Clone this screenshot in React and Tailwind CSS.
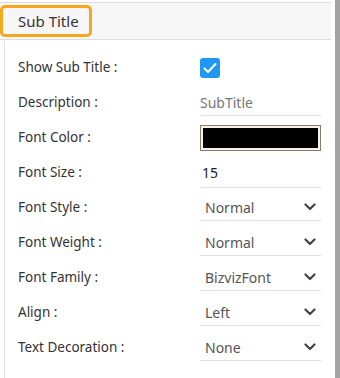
const rows = [
  { label: "Font Style", value: "Normal" },
  { label: "Font Weight", value: "Normal" },
  { label: "Font Family", value: "BizvizFont" },
  { label: "Align", value: "Left" },
  { label: "Text Decoration", value: "None" },
];

const Chevron = () => (
  <svg width="12" height="8" viewBox="0 0 12 8" className="mr-[5px]">
    <path d="M1.5 1.5 L6 6 L10.5 1.5" fill="none" stroke="#444" strokeWidth="2.2" strokeLinecap="round" strokeLinejoin="round" />
  </svg>
);

const Row = ({ label, children }) => (
  <div className="flex items-center h-[35px]">
    <div className="w-[195px] pl-[13px] text-[13.5px] text-[#333]">{label} :</div>
    <div className="w-[121px]">{children}</div>
  </div>
);

const App = () => {
  return (
    <div className="w-[340px] h-[378px] bg-white flex overflow-hidden" style={{ fontFamily: '"Noto Sans", sans-serif' }}>
      <div className="flex-1 flex flex-col">
        <div className="mt-[2px] h-[38px] bg-[#f6f6f6] border-t border-b border-[#dcdcdc] flex items-center">
          <div className="h-[32px] w-[92px] border-[3px] border-[#f5a81c] rounded-[5px] flex items-center pl-[15px] text-[15px] text-[#333]">
            Sub Title
          </div>
        </div>
        <div className="flex-1 ml-[4px] border-l border-[#e2e6ea] pt-[10px]">
          <Row label="Show Sub Title">
            <div className="w-[20px] h-[20px] rounded-[3px] bg-[#2196f3] flex items-center justify-center">
              <svg width="14" height="12" viewBox="0 0 14 12">
                <path d="M1.5 6.5 L5 10 L12.5 2" fill="none" stroke="white" strokeWidth="2" strokeLinecap="round" strokeLinejoin="round" />
              </svg>
            </div>
          </Row>
          <Row label="Description">
            <div className="h-[26px] flex items-center border-b border-[#e0e0e0] text-[14px] text-[#777]">SubTitle</div>
          </Row>
          <Row label="Font Color">
            <div className="h-[26px] border border-[#8b7b6b] bg-[#f7f2ec] p-[2px]">
              <div className="w-full h-full bg-black"></div>
            </div>
          </Row>
          <Row label="Font Size">
            <div className="h-[30px] flex items-center border-b border-[#e0e0e0] text-[14px] text-[#222] pl-[2px]">15</div>
          </Row>
          {rows.map((r) => (
            <Row key={r.label} label={r.label}>
              <div className="h-[26px] border-b border-[#e0e0e0] flex items-center justify-between pl-[5px]">
                <span className="text-[14px] text-[#555]">{r.value}</span>
                <Chevron />
              </div>
            </Row>
          ))}
        </div>
      </div>
      <div className="w-[4px]"></div>
      <div className="w-[5px] bg-[#a3a3a3]"></div>
    </div>
  );
};

export default App;
